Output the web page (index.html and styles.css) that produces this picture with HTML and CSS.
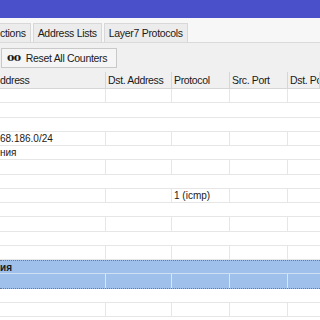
FILE: index.html
```html
<!DOCTYPE html>
<html>
<head>
<meta charset="utf-8">
<link rel="stylesheet" href="styles.css">
</head>
<body>
<div class="window">
  <div class="titlebar"></div>
  <div class="tabstrip">
    <div class="tab first">ctions</div>
    <div class="tab">Address Lists</div>
    <div class="tab">Layer7 Protocols</div>
  </div>
  <div class="toolbar">
    <div class="btn"><span class="oo">oo</span><span>Reset All Counters</span></div>
  </div>
  <div class="table">
    <div class="row head">
      <div class="c c1">ddress</div>
      <div class="c c2">Dst. Address</div>
      <div class="c c3">Protocol</div>
      <div class="c c4">Src. Port</div>
      <div class="c c5">Dst. Po</div>
    </div>
    <div class="row data"><div class="c c1"></div><div class="c c2"></div><div class="c c3"></div><div class="c c4"></div><div class="c c5"></div></div>
    <div class="row comment"></div>
    <div class="row comment"></div>
    <div class="row data"><div class="c c1">68.186.0/24</div><div class="c c2"></div><div class="c c3"></div><div class="c c4"></div><div class="c c5"></div></div>
    <div class="row comment">ния</div>
    <div class="row data"><div class="c c1"></div><div class="c c2"></div><div class="c c3"></div><div class="c c4"></div><div class="c c5"></div></div>
    <div class="row comment"></div>
    <div class="row data"><div class="c c1"></div><div class="c c2"></div><div class="c c3">1 (icmp)</div><div class="c c4"></div><div class="c c5"></div></div>
    <div class="row comment"></div>
    <div class="row data"><div class="c c1"></div><div class="c c2"></div><div class="c c3"></div><div class="c c4"></div><div class="c c5"></div></div>
    <div class="row comment"></div>
    <div class="row data"><div class="c c1"></div><div class="c c2"></div><div class="c c3"></div><div class="c c4"></div><div class="c c5"></div></div>
    <div class="row comment sel first-sel">ия</div>
    <div class="row data sel last-sel"><div class="c c1"></div><div class="c c2"></div><div class="c c3"></div><div class="c c4"></div><div class="c c5"></div></div>
    <div class="row comment"></div>
    <div class="row data"><div class="c c1"></div><div class="c c2"></div><div class="c c3"></div><div class="c c4"></div><div class="c c5"></div></div>
    <div class="row comment"></div>
  </div>
</div>
</body>
</html>
```
FILE: styles.css
```css
html, body {
  margin: 0;
  padding: 0;
  width: 320px;
  height: 320px;
  overflow: hidden;
  background: #ffffff;
}
.window {
  font-family: "Liberation Sans", Arial, sans-serif;
  font-size: 10px;
  color: #1a1a1a;
  width: 320px;
}
.titlebar {
  height: 18px;
  background: #4a4fca;
}
.tabstrip {
  display: flex;
  align-items: flex-end;
  height: 25px;
  background: #f7f7f7;
  border-bottom: 1px solid #dadada;
  box-sizing: border-box;
}
.tab {
  height: 19px;
  display: flex;
  align-items: center;
  padding: 0 4px;
  background: #ececec;
  border: 1px solid #d8d8d8;
  border-bottom: none;
  margin-right: 2px;
  box-sizing: border-box;
  font-size: 10.5px;
  letter-spacing: -0.3px;
}
.tab.first {
  border-left: none;
  padding-left: 0;
}
.toolbar {
  height: 29px;
  background: #f0f0f0;
  display: flex;
  align-items: center;
  padding-left: 1px;
}
.btn {
  height: 20px;
  width: 116px;
  box-sizing: border-box;
  border: 1px solid #c9c9c9;
  background: #f5f5f5;
  display: flex;
  align-items: center;
  gap: 5px;
  padding-left: 5px;
  font-size: 10.5px;
  letter-spacing: -0.3px;
}
.oo {
  font-weight: bold;
  font-family: "DejaVu Serif", serif;
  font-size: 11px;
  letter-spacing: -0.5px;
}
.table {
  background: #ffffff;
}
.row {
  display: flex;
  height: 14.25px;
  box-sizing: border-box;
  border-bottom: 1px solid #e6e6e6;
  align-items: center;
}
.row.head {
  height: 17px;
  background: #f0f0f0;
  border-bottom: 1px solid #d6d6d6;
}
.c {
  box-sizing: border-box;
  height: 100%;
  display: flex;
  align-items: center;
  border-right: 1px solid #e6e6e6;
  padding-left: 2px;
  white-space: nowrap;
  overflow: hidden;
}
.head .c {
  border-right: 1px solid #d6d6d6;
  font-size: 10.5px;
  letter-spacing: -0.35px;
}
.c1 { width: 106px; padding-left: 0; }
.c2 { width: 66px; }
.c3 { width: 58px; }
.c4 { width: 58px; }
.c5 { width: 32px; border-right: none; }
.comment {
  padding-left: 0;
}
.sel {
  background: #9ec0ea;
  border-bottom-color: #d0e0f4;
}
.sel .c {
  border-right-color: #d8e6f6;
}
.first-sel {
  border-top: 1px dotted #6a7a90;
  font-weight: bold;
}
.last-sel {
  border-bottom: 1px dotted #6a7a90;
}
```
